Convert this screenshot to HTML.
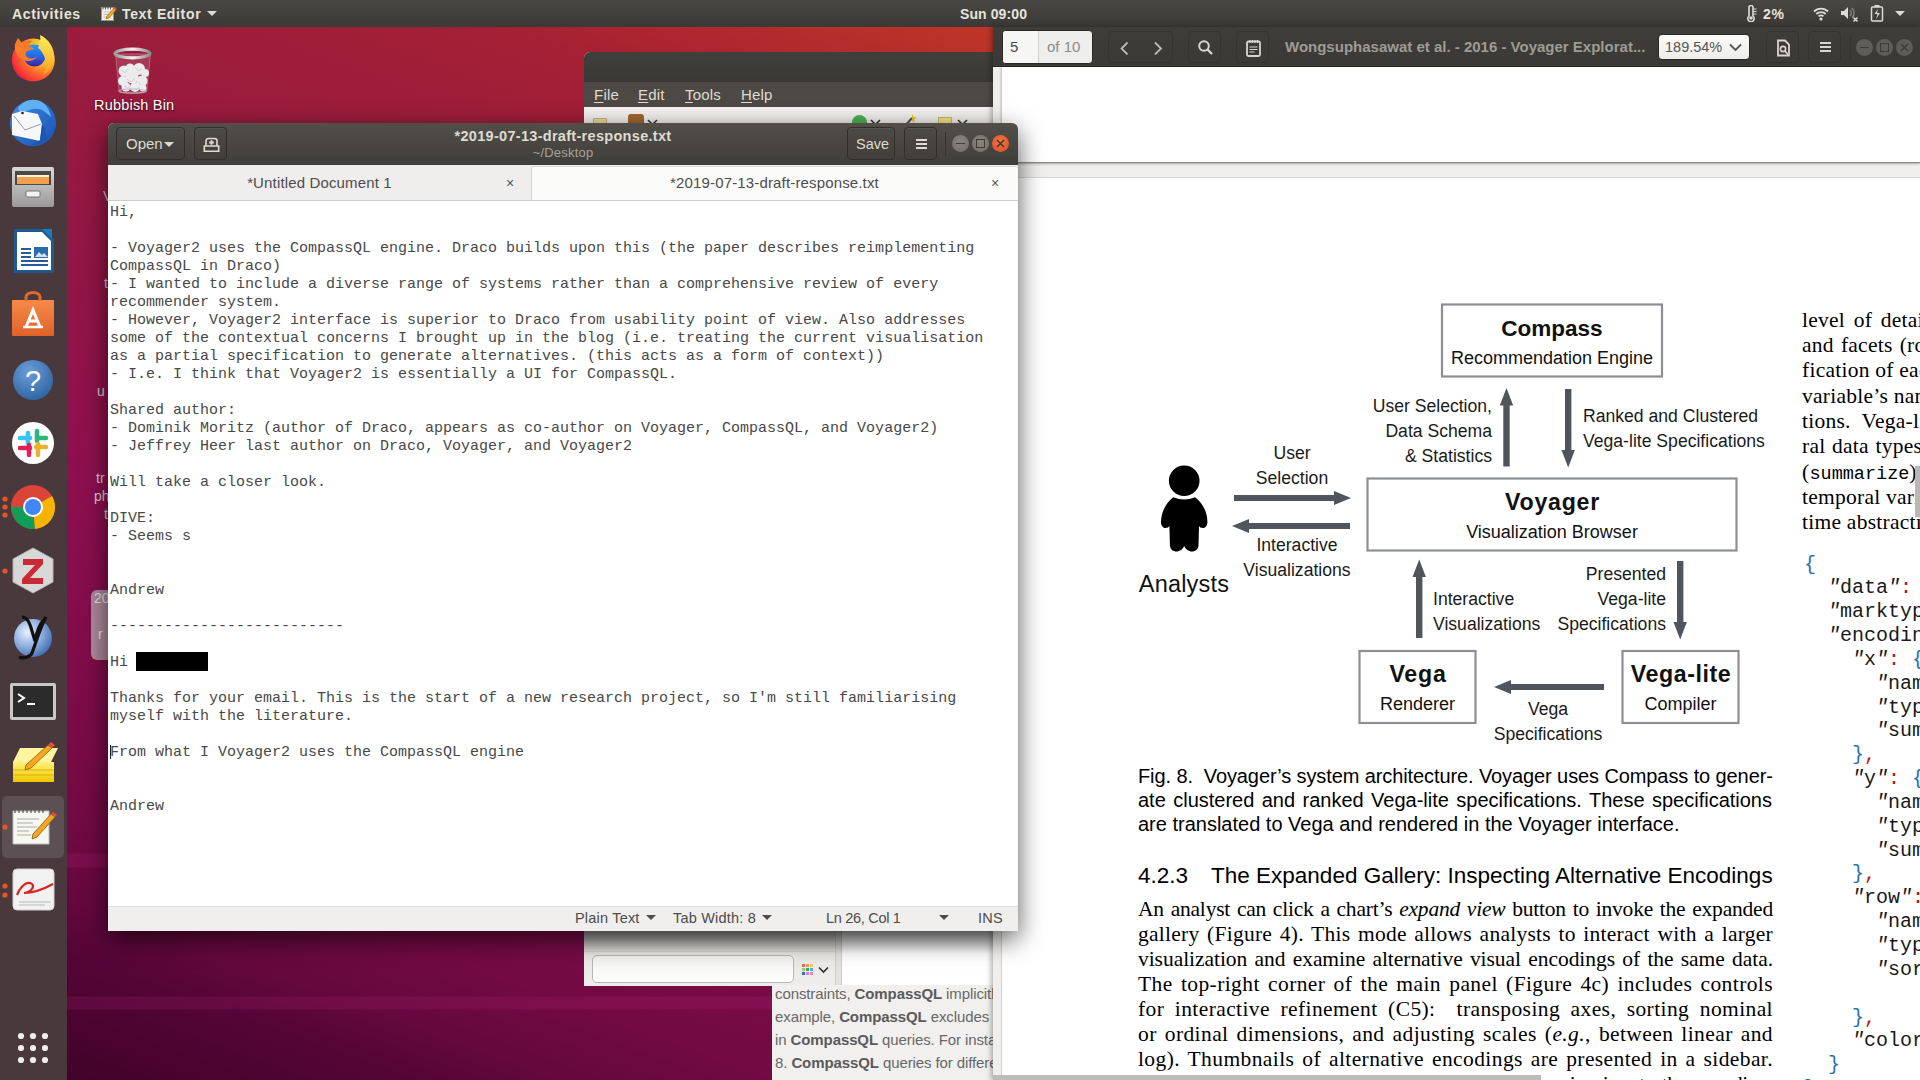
<!DOCTYPE html>
<html><head><meta charset="utf-8">
<style>
*{margin:0;padding:0;box-sizing:border-box}
html,body{width:1920px;height:1080px;overflow:hidden;position:relative;font-family:"Liberation Sans",sans-serif;background:#5a0838}
.a{position:absolute}
#wall{left:0;top:0;width:1920px;height:1080px;background:linear-gradient(180deg,rgba(0,0,0,0) 996px,rgba(200,40,140,.15) 997px,rgba(200,40,140,.15) 1009px,rgba(0,0,0,0) 1010px),linear-gradient(180deg,rgba(0,0,0,0) 853px,rgba(200,40,140,.15) 854px,rgba(200,40,140,.15) 867px,rgba(0,0,0,0) 868px),linear-gradient(20deg,#3c0228 0%,#410329 1.4%,#550537 8.7%,#64083e 11.5%,#730a44 16.4%,#8c0f50 34%,#951744 50%,#9b1c3c 60.6%,#a52034 69.4%,#bf3526 79.5%,#e95420 100%)}
.tb{font-weight:bold;font-size:14px;color:#e6e3dc;white-space:nowrap;line-height:19px;letter-spacing:.65px}
#topbar{left:0;top:0;width:1920px;height:27px;background:linear-gradient(#4a4843,#3a3935)}
#dock{left:0;top:27px;width:67px;height:1053px;background:#49393c}
/* background app window */
.mn{top:34px;font-size:15px;color:#dfdbd2;letter-spacing:.2px}
.mn u{text-decoration-thickness:1px;text-underline-offset:2px}
.zt{left:3px;font-size:15px;letter-spacing:-.1px;line-height:20px;color:#676767;white-space:nowrap}
.zt b{color:#5a5a5a}
.frg{font-size:14px;color:#d9cdd3;white-space:nowrap}
#bgwin{left:584px;top:52px;width:409px;height:934px;background:#f2f1f0;border-radius:6px 0 0 0;overflow:hidden}
/* pdf viewer */
.hb{border:1px solid #34332f;border-radius:4px}
.wbu{width:17px;height:17px;border-radius:50%;background:#5f5d58}
.cap{left:1138px;width:634px;font-size:20px;line-height:24px;color:#000;text-align:justify;text-align-last:justify;white-space:nowrap}
.bd{left:1138px;width:635px;font-family:"Liberation Serif",serif;font-size:21.5px;line-height:25px;color:#000;text-align:justify;text-align-last:justify}
.rc{left:1802px;letter-spacing:.25px;font-family:"Liberation Serif",serif;font-size:21.5px;line-height:25px;color:#000;white-space:nowrap}
.cb{color:#2a6db5}.cr{color:#b01818}
#pdf{left:993px;top:27px;width:927px;height:1053px;background:#f0efed;box-shadow:-2px 0 5px rgba(0,0,0,.3)}
#pdfhdr{left:0;top:0;width:927px;height:40px;background:linear-gradient(#3e3d39,#3a3935);border-bottom:1px solid #2a2926}
/* text editor */
#ed{left:108px;top:123px;width:910px;height:808px;background:#fff;border-radius:6px 6px 0 0;box-shadow:0 8px 26px rgba(0,0,0,.65)}
#edhdr{left:0;top:0;width:910px;height:42px;background:linear-gradient(#524f49,#403e3a);border-radius:6px 6px 0 0}
#tabs{left:0;top:42px;width:910px;height:36px;background:#efeeec;border-bottom:1px solid #cfcdc8}
#txt{left:0;top:78px;width:910px;height:705px;background:#fff;font-family:"Liberation Mono",monospace;font-size:15px;line-height:18px;color:#484848;padding:3px 0 0 2px;white-space:pre}
.st{top:3px;font-size:14.5px;color:#4c4c4c;white-space:nowrap;letter-spacing:.2px}
.tri{width:0;height:0;border-left:5px solid transparent;border-right:5px solid transparent;border-top:5px solid #4c4c4c}
.btn{border:1px solid #2f2e2b;border-radius:4px;background:linear-gradient(#4c4a44,#423f3b);box-shadow:inset 0 1px 0 rgba(255,255,255,.06)}
.wbtn{width:17px;height:17px;border-radius:50%;background:radial-gradient(circle at 50% 40%,#8a877f,#6f6c66)}
#status{left:0;top:783px;width:910px;height:25px;background:#f0efed;border-top:1px solid #e0deda}
</style></head><body>
<div id="wall" class="a"></div>
<div id="topbar" class="a">
 <div class="a tb" style="left:12px;top:5px">Activities</div>
 <svg class="a" style="left:100px;top:5px" width="17" height="17" viewBox="0 0 17 17"><rect x="1.5" y="2.5" width="12" height="13" fill="#f4f1e6" stroke="#9a968a" stroke-width="1"/><path d="M3 1.5v3M5.5 1.5v3M8 1.5v3M10.5 1.5v3" stroke="#666" stroke-width="1"/><path d="M3.5 7h8M3.5 9.5h8M3.5 12h5" stroke="#bbb" stroke-width="1"/><path d="M6 14l1-3 7-8 2 2-7 8z" fill="#f5a623" stroke="#8a5a00" stroke-width=".6"/><path d="M14 3l2 2 1-1-2-2z" fill="#e74c3c"/></svg>
 <div class="a tb" style="left:122px;top:5px">Text Editor</div>
 <div class="a" style="left:207px;top:11px;width:0;height:0;border-left:5px solid transparent;border-right:5px solid transparent;border-top:5px solid #dedbd4"></div>
 <div class="a tb" style="left:960px;top:5px;letter-spacing:.1px">Sun 09:00</div>
 <svg class="a" style="left:1746px;top:5px" width="12" height="17" viewBox="0 0 12 17"><path d="M3 2.5a2 2 0 0 1 4 0v8.5a3.2 3.2 0 1 1-4 0z" fill="none" stroke="#dedbd4" stroke-width="1.6"/><circle cx="5" cy="13" r="1.8" fill="#dedbd4"/><path d="M7.5 4h3M7.5 6.5h3M7.5 9h3" stroke="#dedbd4" stroke-width="1.2"/></svg>
 <div class="a tb" style="left:1763px;top:5px">2%</div>
 <svg class="a" style="left:1813px;top:6px" width="16" height="15" viewBox="0 0 16 15"><path d="M1 5.5a10 10 0 0 1 14 0M3.3 8a6.6 6.6 0 0 1 9.4 0M5.6 10.4a3.3 3.3 0 0 1 4.8 0" fill="none" stroke="#dedbd4" stroke-width="1.8"/><circle cx="8" cy="13" r="1.6" fill="#dedbd4"/></svg>
 <svg class="a" style="left:1840px;top:5px" width="19" height="17" viewBox="0 0 19 17"><path d="M1 6h3l4-4v12l-4-4H1z" fill="#dedbd4"/><path d="M10 5a4 4 0 0 1 0 6M12 3a7 7 0 0 1 0 10" fill="none" stroke="#8d8a84" stroke-width="1.3"/><path d="M13.5 12.5l4 4M17.5 12.5l-4 4" stroke="#dedbd4" stroke-width="1.5"/></svg>
 <svg class="a" style="left:1870px;top:4px" width="14" height="18" viewBox="0 0 14 18"><rect x="1.5" y="3" width="11" height="14" rx="1" fill="none" stroke="#dedbd4" stroke-width="1.5"/><rect x="4.5" y="1" width="5" height="2" fill="#dedbd4"/><path d="M8 5l-3.5 5h3l-1.5 5 4-6h-3z" fill="#dedbd4"/></svg>
 <div class="a" style="left:1895px;top:11px;width:0;height:0;border-left:5px solid transparent;border-right:5px solid transparent;border-top:5px solid #dedbd4"></div>
</div>
<div id="dock" class="a">
 <svg class="a" style="left:0;top:0" width="67" height="1053" viewBox="0 27 67 1053">
  <!-- firefox -->
  <defs>
   <radialGradient id="ffg" cx=".8" cy=".25" r="1"><stop offset="0" stop-color="#fff44f"/><stop offset=".35" stop-color="#ffb32a"/><stop offset=".6" stop-color="#ff6a2a"/><stop offset=".85" stop-color="#f5283a"/><stop offset="1" stop-color="#c71a6a"/></radialGradient><linearGradient id="ffb" x1="0" y1="0" x2="0" y2="1"><stop offset="0" stop-color="#1aa0ff"/><stop offset=".6" stop-color="#2a5ee0"/><stop offset="1" stop-color="#3a1f9a"/></linearGradient><linearGradient id="ffy" x1="0" y1="0" x2="0" y2="1"><stop offset="0" stop-color="#fff05a"/><stop offset="1" stop-color="#ffa020"/></linearGradient>
   <radialGradient id="ffc" cx=".5" cy=".5" r=".5"><stop offset="0" stop-color="#7542e5"/><stop offset="1" stop-color="#3a1a8a"/></radialGradient>
   <linearGradient id="tbg" x1="0" y1="0" x2="1" y2="1"><stop offset="0" stop-color="#3d8ee8"/><stop offset="1" stop-color="#1a4fb0"/></linearGradient>
   <linearGradient id="cab" x1="0" y1="0" x2="0" y2="1"><stop offset="0" stop-color="#d8d8d8"/><stop offset="1" stop-color="#9a9a9a"/></linearGradient>
   <linearGradient id="bag" x1="0" y1="0" x2="0" y2="1"><stop offset="0" stop-color="#f68a4a"/><stop offset="1" stop-color="#e0622a"/></linearGradient>
   <radialGradient id="hlp" cx=".4" cy=".3" r=".8"><stop offset="0" stop-color="#6a9fd8"/><stop offset="1" stop-color="#2a5f9e"/></radialGradient>
   <radialGradient id="jab" cx=".35" cy=".35" r=".75"><stop offset="0" stop-color="#e8f0ff"/><stop offset=".5" stop-color="#8fb0e0"/><stop offset="1" stop-color="#3a68b0"/></radialGradient>
   <linearGradient id="nts" x1="0" y1="0" x2="0" y2="1"><stop offset="0" stop-color="#fff27a"/><stop offset="1" stop-color="#f0c800"/></linearGradient>
  </defs>
  <circle cx="33.3" cy="60" r="21.5" fill="url(#ffg)"/>
  <circle cx="34.5" cy="55.5" r="11" fill="url(#ffb)"/>
  <path d="M15 44l3-6 4 5c3-2 7-3 10-2-2 2-3 4-3 6 2 0 4 0 5 2-3 1-6 1-8 3-1 2 0 5 3 6 3 1 6 0 8-1-3 4-9 5-14 3-6-3-9-10-8-16z" fill="#ff7a2a"/>
  <path d="M40 35c9 4 15 13 14 24-1 7-5 13-11 16 3-5 4-11 2-16-1-5-4-9-7-11 2-4 3-9 2-13z" fill="url(#ffy)"/>
  <!-- thunderbird -->
  <circle cx="33" cy="123.3" r="23" fill="url(#tbg)"/>
  <path d="M18 108c5-8 14-10 22-7 6 3 10 9 11 16l-6-5c-3-3-8-4-12-3-5 1-9 3-12 6z" fill="#5fb0f5"/>
  <path d="M12 114l10-3 16 3 4 10-2 17-28-6z" fill="#f7f7f9"/>
  <path d="M14 116l11 14 16-6" fill="none" stroke="#8a8f98" stroke-width=".9"/>
  <circle cx="22.5" cy="113" r="1.3" fill="#222"/>
  <path d="M42 124c3 4 5 10 3 15-3 4-8 6-13 6l8-5z" fill="#1b56b0"/>
  <!-- files -->
  <rect x="12" y="167" width="42" height="40" rx="2" fill="url(#cab)"/>
  <rect x="15" y="171" width="36" height="14" fill="#4a4a4a"/>
  <rect x="17" y="175" width="32" height="9" fill="#f0a050"/>
  <rect x="17" y="175" width="32" height="2" fill="#fff3d0"/>
  <rect x="26" y="191" width="14" height="6" rx="1" fill="#f4f4f4" stroke="#777" stroke-width="1"/>
  <!-- writer -->
  <path d="M14 229h30l10 10v34H14z" fill="#1d5a8f"/>
  <path d="M17 232h25l9 9v29H17z" fill="#fff"/>
  <path d="M42 229h10v10z" fill="#1d79c0"/>
  <rect x="34" y="247" width="14" height="11" fill="#2a6aad"/><path d="M35 257l4-5 3 3 2-2 4 4z" fill="#d0e4f7"/>
  <path d="M21 249h10M21 253h10M21 257h10M21 261h27M21 265h27" stroke="#2a5a9a" stroke-width="2"/>
  <!-- software -->
  <rect x="12" y="300" width="42" height="36" rx="1" fill="url(#bag)"/>
  <path d="M26 301v-4a7 4.5 0 0 1 14 0v4" fill="none" stroke="#e06a2a" stroke-width="3"/>
  <path d="M26 327l7-17 7 17M28 321h10" fill="none" stroke="#fff" stroke-width="3"/>
  <path d="M23 327h20" stroke="#fff" stroke-width="2.5"/>
  <!-- help -->
  <circle cx="33" cy="380" r="20" fill="url(#hlp)"/>
  <text x="33" y="391" font-family="Liberation Sans" font-size="29" fill="#fff" text-anchor="middle">?</text>
  <!-- slack -->
  <circle cx="33" cy="443" r="21" fill="#fff"/>
  <g stroke-linecap="round" stroke-width="4.5">
   <path d="M28 433v10" stroke="#36c5f0"/><path d="M20 438h10" stroke="#36c5f0"/>
   <path d="M37 431v10" stroke="#2eb67d"/><path d="M37 438h9" stroke="#2eb67d"/>
   <path d="M38 444v11" stroke="#ecb22e"/><path d="M36 447h10" stroke="#ecb22e"/>
   <path d="M29 445v10" stroke="#e01e5a"/><path d="M20 448h10" stroke="#e01e5a"/>
  </g>
  <!-- chrome -->
  <circle cx="33" cy="507" r="22" fill="#db4437"/>
  <path d="M33 507L14 518a22 22 0 0 0 21 11z" fill="#0f9d58"/>
  <path d="M33 507l2 22a22 22 0 0 0 17-33z" fill="#f4b400"/>
  <path d="M33 507L14 518a22 22 0 0 1-2-11z" fill="#0f9d58"/>
  <circle cx="33" cy="507" r="10" fill="#fff"/><circle cx="33" cy="507" r="8" fill="#4285f4"/>
  <!-- zotero -->
  <path d="M33 548l20 11v23l-20 11-20-11v-23z" fill="#d8d8d8" stroke="#b0b0b0" stroke-width="1"/>
  <path d="M23 559h20v5l-13 14h13v6H22v-5l13-14H23z" fill="#cc2936"/>
  <!-- jabref -->
  <circle cx="33" cy="638" r="19" fill="url(#jab)"/>
  <path d="M22 617c5 0 8 6 10 14l3 10c2-10 5-18 9-21l2-3c-5 9-9 22-14 36-2 4-8 6-13 4" fill="none" stroke="#111" stroke-width="3.2"/>
  <!-- terminal -->
  <rect x="10" y="683" width="46" height="37" rx="2" fill="#c8c8c8"/>
  <rect x="13" y="686" width="40" height="31" fill="#2b2b2b"/>
  <path d="M18 694l6 4-6 4" fill="none" stroke="#fff" stroke-width="2"/><path d="M27 704h8" stroke="#fff" stroke-width="2"/>
  <!-- notes -->
  <path d="M13 762l7-14h38l-7 14z" fill="#fff5a0"/>
  <rect x="13" y="762" width="41" height="20" fill="url(#nts)"/>
  <path d="M13 770h41M13 775h41" stroke="#e0b000" stroke-width="1"/>
  <path d="M26 765l22-20 4 3-21 20-6 2z" fill="#f5a623" stroke="#8a5a00" stroke-width=".8"/><path d="M48 745l3-3 4 3-3 3z" fill="#e74c3c"/>
  <!-- gedit highlight -->
  <rect x="2" y="796" width="62" height="62" rx="5" fill="#5c5054"/>
  <path d="M13 811h36v33H13z" fill="#f7f7f2" stroke="#bbb" stroke-width="1"/>
  <path d="M15 808v5M19 808v5M23 808v5M27 808v5M31 808v5M35 808v5M39 808v5M43 808v5" stroke="#555" stroke-width="1.2"/>
  <path d="M17 819h22M17 823h16M17 827h20M17 831h12M17 835h14" stroke="#aaa" stroke-width="1"/>
  <path d="M33 834l18-20 4 3-18 20-5 2z" fill="#f5a623" stroke="#8a5a00" stroke-width=".8"/><path d="M51 814l2-2 4 3-2 2z" fill="#e74c3c"/>
  <!-- evince -->
  <rect x="13" y="869" width="41" height="41" rx="4" fill="#f2f2f2" stroke="#cfcfcf" stroke-width="1"/>
  <path d="M17 895c3-8 10-15 15-11 3 3-2 9-8 9 8 0 18-3 29-9" fill="none" stroke="#d22" stroke-width="2.2"/>
  <path d="M19 902h32M19 905h26" stroke="#bbb" stroke-width="1"/>
  <!-- running dots -->
  <g fill="#e95420">
   <circle cx="5" cy="499" r="2.6"/><circle cx="5" cy="507" r="2.6"/><circle cx="5" cy="515" r="2.6"/>
   <circle cx="5" cy="571" r="2.6"/>
   <circle cx="5" cy="827" r="2.6"/>
   <circle cx="5" cy="886" r="2.6"/><circle cx="5" cy="895" r="2.6"/>
  </g>
  <g fill="#f0eeea">
   <circle cx="21" cy="1036" r="3.1"/><circle cx="33" cy="1036" r="3.1"/><circle cx="45" cy="1036" r="3.1"/>
   <circle cx="21" cy="1048" r="3.1"/><circle cx="33" cy="1048" r="3.1"/><circle cx="45" cy="1048" r="3.1"/>
   <circle cx="21" cy="1060" r="3.1"/><circle cx="33" cy="1060" r="3.1"/><circle cx="45" cy="1060" r="3.1"/>
  </g>
 </svg>
</div>
<div class="a" style="left:112px;top:46px;width:42px;height:48px">
 <svg class="a" style="left:0;top:0" width="42" height="48" viewBox="0 0 42 48"><defs><linearGradient id="rim" x1="0" y1="0" x2="1" y2="0"><stop offset="0" stop-color="#9a9a9a"/><stop offset=".5" stop-color="#f2f2f2"/><stop offset="1" stop-color="#8a8a8a"/></linearGradient></defs><path d="M3.5 8l3.5 37c1 2 7 2.5 14 2.5s13-.5 14-2.5l3.5-37z" fill="rgba(255,255,255,.13)" stroke="rgba(255,255,255,.3)" stroke-width=".8"/><g fill="#ececec"><circle cx="12" cy="25" r="5.5"/><circle cx="18" cy="22" r="4.5"/><circle cx="27" cy="23" r="6"/><circle cx="33" cy="27" r="4"/><circle cx="11" cy="35" r="5"/><circle cx="20" cy="31" r="6.5"/><circle cx="30" cy="35" r="5.5"/><circle cx="14" cy="41" r="4.5"/><circle cx="23" cy="41" r="5"/><circle cx="31" cy="42" r="3.5"/></g><g fill="none" stroke="#c4c4c4" stroke-width=".7"><path d="M9 24l4 3 3-4M23 21l3 4 4-2M15 33l4 3 4-4M26 36l3 3M12 40l4 2 3-3M24 44l3-3"/></g><ellipse cx="20.5" cy="45" rx="14" ry="2" fill="none" stroke="#bdbdbd" stroke-width="1"/><ellipse cx="20.5" cy="7.5" rx="17.5" ry="4.3" fill="none" stroke="url(#rim)" stroke-width="3.2"/></svg>
</div>
<div class="a" style="left:94px;top:97px;font-size:14.5px;color:#fff;text-shadow:0 1px 2px rgba(0,0,0,.8);letter-spacing:.2px">Rubbish Bin</div>

<div class="a" style="left:91px;top:590px;width:30px;height:70px;background:rgba(190,180,184,.75);border-radius:6px"></div>
<div class="a frg" style="left:94px;top:590px;color:#e8e4e6">20</div>
<div class="a frg" style="left:98px;top:626px;color:#e8e4e6">r</div>
<div class="a frg" style="left:103px;top:188px">V</div>
<div class="a frg" style="left:104px;top:275px">t</div>
<div class="a frg" style="left:97px;top:383px">u</div>
<div class="a frg" style="left:96px;top:470px">tr</div>
<div class="a frg" style="left:94px;top:488px">ph</div>
<div class="a frg" style="left:104px;top:506px">t</div>
<div id="bgwin" class="a">
 <div class="a" style="left:0;top:0;width:409px;height:30px;background:linear-gradient(#403f3b,#3a3935)"></div>
 <div class="a" style="left:0;top:30px;width:409px;height:25px;background:#4d4a45"></div>
 <div class="a mn" style="left:10px"><u>F</u>ile</div>
 <div class="a mn" style="left:54px"><u>E</u>dit</div>
 <div class="a mn" style="left:101px"><u>T</u>ools</div>
 <div class="a mn" style="left:157px"><u>H</u>elp</div>
 <div class="a" style="left:0;top:55px;width:409px;height:40px;background:linear-gradient(#f6f5f3,#e2e0dc)"></div>
 <div class="a" style="left:9px;top:66px;width:14px;height:12px;background:#e8d7a0;border:1px solid #c8b27a;border-radius:1px"></div>
 <div class="a" style="left:44px;top:62px;width:16px;height:14px;background:#a0662e;border-radius:3px 3px 0 0"></div>
 <svg class="a" style="left:63px;top:67px" width="11" height="7"><path d="M1 1l4.5 4.5L10 1" fill="none" stroke="#333" stroke-width="1.6"/></svg>
 <div class="a" style="left:268px;top:63px;width:15px;height:15px;background:#4caf50;border-radius:50%"></div>
 <svg class="a" style="left:286px;top:67px" width="11" height="7"><path d="M1 1l4.5 4.5L10 1" fill="none" stroke="#333" stroke-width="1.6"/></svg>
 <svg class="a" style="left:320px;top:61px" width="12" height="14"><path d="M1 13l7-8" stroke="#555" stroke-width="2"/><path d="M8 1l1.5 3 3 .5-2.5 2 .5 3-2.5-1.5" fill="#f4c20d"/></svg>
 <div class="a" style="left:354px;top:65px;width:14px;height:13px;background:#f2e08a;border:1px solid #cdb85c"></div>
 <svg class="a" style="left:373px;top:67px" width="11" height="7"><path d="M1 1l4.5 4.5L10 1" fill="none" stroke="#333" stroke-width="1.6"/></svg>
 <div class="a" style="left:0;top:878px;width:251px;height:56px;background:linear-gradient(#d4d2ce,#eae9e6 40%,#eeedeb)"></div>
 <div class="a" style="left:0;top:899px;width:251px;height:1px;background:#dddbd7"></div>
 <div class="a" style="left:8px;top:903px;width:202px;height:28px;border:1px solid #b9b7b2;border-radius:5px;background:linear-gradient(#f2f1f0,#fff)"></div>
 <div class="a" style="left:218px;top:912px;width:11px;height:11px;background:
  radial-gradient(circle,#e74c3c 1.2px,transparent 1.3px) 0 0/3.7px 3.7px"></div>
 <svg class="a" style="left:218px;top:912px" width="11" height="11"><g><rect x="0" y="0" width="3" height="3" fill="#e66"/><rect x="4" y="0" width="3" height="3" fill="#f0a050"/><rect x="8" y="0" width="3" height="3" fill="#f0d050"/><rect x="0" y="4" width="3" height="3" fill="#8c8"/><rect x="4" y="4" width="3" height="3" fill="#4a4"/><rect x="8" y="4" width="3" height="3" fill="#5af"/><rect x="0" y="8" width="3" height="3" fill="#46a"/><rect x="4" y="8" width="3" height="3" fill="#c8e"/><rect x="8" y="8" width="3" height="3" fill="#e8a"/></g></svg>
 <svg class="a" style="left:234px;top:914px" width="11" height="8"><path d="M1 1.5l4.5 4.5L10 1.5" fill="none" stroke="#333" stroke-width="1.7"/></svg>
 <div class="a" style="left:251px;top:878px;width:7px;height:56px;background:#e4e3e0;border-left:1px solid #cfcdc9;border-right:1px solid #cfcdc9"></div>
 <div class="a" style="left:258px;top:878px;width:151px;height:56px;background:#fff"></div>
 <div class="a" style="left:0;top:878px;width:409px;height:24px;background:linear-gradient(rgba(0,0,0,.35),rgba(0,0,0,0))"></div>
</div>
<div id="zot" class="a" style="left:772px;top:985px;width:221px;height:95px;background:#f1f0ee;overflow:hidden">
 <div class="a zt" style="top:-1px">constraints, <b>CompassQL</b> implicitly</div>
 <div class="a zt" style="top:22px">example, <b>CompassQL</b> excludes data</div>
 <div class="a zt" style="top:45px">in <b>CompassQL</b> queries. For instance</div>
 <div class="a zt" style="top:68px">8. <b>CompassQL</b> queries for different</div>
</div>
<div id="pdf" class="a">
 <div id="pdfhdr" class="a">
  <div class="a" style="left:9px;top:3px;width:91px;height:34px;border:1px solid #2a2926;border-radius:4px;background:#eeeeec;overflow:hidden">
   <div class="a" style="left:0;top:0;width:36px;height:32px;background:#f6f6f5;border-right:1px solid #cfcdc8"></div>
   <div class="a" style="left:7px;top:7px;font-size:15px;color:#4a4a4a">5</div>
   <div class="a" style="left:44px;top:7px;font-size:15px;color:#8b8b8b">of 10</div>
  </div>
  <div class="a hb" style="left:115px;top:4px;width:65px;height:32px"><svg class="a" style="left:9px;top:9px" width="48" height="14" viewBox="0 0 48 14"><path d="M9.5 1.5L3.5 7.5l6 6M37 1.5l6 6-6 6" fill="none" stroke="#bdbab3" stroke-width="1.8"/></svg></div>
  <div class="a hb" style="left:195px;top:4px;width:33px;height:32px"><svg class="a" style="left:8px;top:7px" width="17" height="17" viewBox="0 0 17 17"><circle cx="7" cy="7" r="4.8" fill="none" stroke="#d8d5ce" stroke-width="2"/><path d="M10.5 10.5l4.5 4.5" stroke="#d8d5ce" stroke-width="2.4"/></svg></div>
  <div class="a hb" style="left:243px;top:4px;width:33px;height:32px"><svg class="a" style="left:9px;top:7px" width="15" height="18" viewBox="0 0 15 18"><rect x="1" y="2.5" width="13" height="14.5" rx="1.5" fill="none" stroke="#d8d5ce" stroke-width="1.8"/><path d="M4 1v3M6.5 1v3M9 1v3M11.5 1v3" stroke="#d8d5ce" stroke-width="1.2"/><path d="M3.5 8h8M3.5 10.5h8M3.5 13h5" stroke="#d8d5ce" stroke-width="1.2"/></svg></div>
  <div class="a" id="pdftitle" style="left:292px;top:11px;font-weight:bold;font-size:15px;color:#9e9b94;white-space:nowrap;letter-spacing:0px">Wongsuphasawat et al. - 2016 - Voyager Explorat...</div>
  <div class="a" style="left:665px;top:7px;width:92px;height:26px;border:1px solid #2a2926;border-radius:4px;background:linear-gradient(#fbfbfa,#eeeeec)">
   <div class="a" id="zoomt" style="left:6px;top:4px;font-size:14.5px;color:#555">189.54%</div>
   <svg class="a" style="left:70px;top:8px" width="13" height="9" viewBox="0 0 13 9"><path d="M1 1.5l5.5 5.5 5.5-5.5" fill="none" stroke="#555" stroke-width="1.8"/></svg>
  </div>
  <div class="a hb" style="left:773px;top:4px;width:33px;height:32px"><svg class="a" style="left:9px;top:7px" width="15" height="18" viewBox="0 0 15 18"><path d="M2 1.5h7l4 4v11H2z" fill="none" stroke="#d8d5ce" stroke-width="1.8"/><circle cx="7" cy="10" r="2.6" fill="none" stroke="#d8d5ce" stroke-width="1.6"/><path d="M9 12l3 3.5" stroke="#d8d5ce" stroke-width="1.8"/></svg></div>
  <div class="a hb" style="left:815px;top:4px;width:33px;height:32px"><div class="a" style="left:11px;top:10px;width:11px;height:2px;background:#d8d5ce;box-shadow:0 4px 0 #d8d5ce,0 8px 0 #d8d5ce"></div></div>
  <div class="a" style="left:857px;top:9px;width:1px;height:24px;background:#34332f"></div>
  <div class="a wbu" style="left:863px;top:12px"><div class="a" style="left:4px;top:7.5px;width:9px;height:1.5px;background:#3c3b37"></div></div>
  <div class="a wbu" style="left:883px;top:12px"><div class="a" style="left:4px;top:4px;width:9px;height:9px;border:1.5px solid #3c3b37"></div></div>
  <div class="a wbu" style="left:903px;top:12px"><svg class="a" style="left:4px;top:4px" width="9" height="9" viewBox="0 0 9 9"><path d="M1 1l7 7M8 1l-7 7" stroke="#3c3b37" stroke-width="1.5"/></svg></div>
 </div>
 <div class="a" style="left:8px;top:40px;width:919px;height:96px;background:#fff;border-left:1px solid #d0cfcc;border-bottom:1px solid #8c8b88;box-shadow:0 1px 2px rgba(0,0,0,.3)"></div>
 <div class="a" id="page2" style="left:8px;top:150px;width:919px;height:903px;background:#fff;border-top:1px solid #d9d8d5;border-left:1px solid #d0cfcc"></div>
</div>
<svg id="diag" class="a" style="left:0;top:0" width="1920" height="1080" viewBox="0 0 1920 1080">
 <g fill="none" stroke="#8c8f94" stroke-width="2.2">
  <rect x="1442" y="304.5" width="220" height="72"/>
  <rect x="1367.5" y="478.5" width="369" height="72"/>
  <rect x="1359.5" y="651" width="116" height="72"/>
  <rect x="1622.5" y="651" width="116" height="72"/>
 </g>
 <g fill="#50555d">
  <path d="M1234 495h100v-4l17 7-17 7v-4h-100z"/>
  <path d="M1350 523h-101v-4l-17 7 17 7v-4h101z"/>
  <path d="M1503.3 466.5v-61h-3.5l6.7-17.5 6.7 17.5h-3.5v61z"/>
  <path d="M1565 389v61h-3.5l6.7 17.5 6.7-17.5h-3.5v-61z"/>
  <path d="M1416 638v-61h-3.5l6.7-17.5 6.7 17.5h-3.5v61z"/>
  <path d="M1677 561v61h-3.5l6.7 17.5 6.7-17.5h-3.5v-61z"/>
  <path d="M1604 684h-93v-4l-17 7 17 7v-4h93z"/>
 </g>
 <g fill="#000">
  <circle cx="1184.2" cy="480.8" r="15.3"/>
  <path d="M1173.3 497.2Q1184.2 502 1195.1 497.2C1203 503 1207.5 513 1207.4 522C1207.4 526 1205 528 1203 528C1201 528 1199.5 527 1199 525.7L1198.5 545C1198.5 549.5 1195 551.5 1192 551.5C1188.5 551.5 1185.5 549 1184.2 546C1182.9 549 1179.9 551.5 1176.4 551.5C1173.4 551.5 1169.9 549.5 1169.9 545L1169.4 525.7C1168.9 527 1167.4 528 1165.4 528C1163.4 528 1161 526 1161 522C1161 513 1165.4 503 1173.3 497.2Z"/>
 </g>
 <g font-family="Liberation Sans" fill="#111">
  <text x="1552" y="336" font-size="22.5" font-weight="bold" text-anchor="middle">Compass</text>
  <text x="1552" y="364" font-size="18" text-anchor="middle">Recommendation Engine</text>
  <text x="1552.5" y="510" font-size="23.2" font-weight="bold" text-anchor="middle" letter-spacing=".75">Voyager</text>
  <text x="1552" y="538" font-size="18" text-anchor="middle">Visualization Browser</text>
  <text x="1418" y="682" font-size="23.2" font-weight="bold" text-anchor="middle" letter-spacing=".75">Vega</text>
  <text x="1417.5" y="710" font-size="18" text-anchor="middle">Renderer</text>
  <text x="1681" y="682" font-size="23.2" font-weight="bold" text-anchor="middle" letter-spacing=".55">Vega-lite</text>
  <text x="1680.5" y="710" font-size="18" text-anchor="middle">Compiler</text>
  <text x="1184" y="592" font-size="23.5" text-anchor="middle" letter-spacing=".2">Analysts</text>
 </g>
 <g font-family="Liberation Sans" fill="#1a1a1a" font-size="17.6">
  <text x="1492" y="412" text-anchor="end">User Selection,</text>
  <text x="1492" y="437" text-anchor="end">Data Schema</text>
  <text x="1492" y="462" text-anchor="end">&amp; Statistics</text>
  <text x="1583" y="421.5">Ranked and Clustered</text>
  <text x="1583" y="446.5">Vega-lite Specifications</text>
  <text x="1292" y="459" text-anchor="middle">User</text>
  <text x="1292" y="484" text-anchor="middle">Selection</text>
  <text x="1297" y="550.5" text-anchor="middle">Interactive</text>
  <text x="1297" y="575.5" text-anchor="middle">Visualizations</text>
  <text x="1433" y="604.5">Interactive</text>
  <text x="1433" y="629.5">Visualizations</text>
  <text x="1666" y="579.5" text-anchor="end">Presented</text>
  <text x="1666" y="604.5" text-anchor="end">Vega-lite</text>
  <text x="1666" y="629.5" text-anchor="end">Specifications</text>
  <text x="1548" y="715" text-anchor="middle">Vega</text>
  <text x="1548" y="740" text-anchor="middle">Specifications</text>
 </g>
</svg>
<div id="pdftext" class="a" style="left:0;top:0;width:1920px;height:1080px;overflow:hidden">
 <div class="a cap" style="top:763.5px;letter-spacing:-.1px">Fig. 8.&nbsp; Voyager’s system architecture. Voyager uses Compass to gener-</div>
 <div class="a cap" style="top:787.5px">ate clustered and ranked Vega-lite specifications. These specifications</div>
 <div class="a cap" style="top:811.5px;text-align-last:left">are translated to Vega and rendered in the Voyager interface.</div>
 <div class="a" style="left:1138px;top:862.5px;font-size:22.5px;line-height:26px;color:#000;white-space:nowrap">4.2.3<span style="display:inline-block;width:23px"></span>The Expanded Gallery: Inspecting Alternative Encodings</div>
 <div class="a bd" style="top:896.5px;letter-spacing:-0.2px">An analyst can click a chart’s <i>expand view</i> button to invoke the expanded</div>
 <div class="a bd" style="top:921.5px;letter-spacing:0.25px">gallery (Figure 4). This mode allows analysts to interact with a larger</div>
 <div class="a bd" style="top:946.5px;letter-spacing:-0.05px">visualization and examine alternative visual encodings of the same data.</div>
 <div class="a bd" style="top:971.5px;letter-spacing:0.4px">The top-right corner of the main panel (Figure 4c) includes controls</div>
 <div class="a bd" style="top:996.5px;letter-spacing:0.4px">for interactive refinement (C5):&nbsp; transposing axes, sorting nominal</div>
 <div class="a bd" style="top:1021.5px;letter-spacing:0.4px">or ordinal dimensions, and adjusting scales (<i>e.g.</i>, between linear and</div>
 <div class="a bd" style="top:1046.5px;letter-spacing:0.4px">log). Thumbnails of alternative encodings are presented in a sidebar.</div>
 <div class="a bd" style="top:1071.5px;letter-spacing:-0.5px">Analysts can click on a thumbnail to switch the main view to the encoding.</div>
 <div class="a rc" style="top:307.5px;word-spacing:3px">level of detail (e.g., color, shape, size)</div>
 <div class="a rc" style="top:332.5px;word-spacing:1.5px">and facets (row, column), and the speci-</div>
 <div class="a rc" style="top:358px">fication of each channel includes the</div>
 <div class="a rc" style="top:383.5px">variable’s name and transforma-</div>
 <div class="a rc" style="top:408.5px">tions.&nbsp; Vega-lite supports</div>
 <div class="a rc" style="top:434px;word-spacing:1px">ral data types, aggregation</div>
 <div class="a rc" style="top:459.5px">(<span style="font-family:'Liberation Mono',monospace;font-size:18.5px;letter-spacing:0">summarize</span>), binning and</div>
 <div class="a rc" style="top:484.5px">temporal variables with</div>
 <div class="a rc" style="top:510px">time abstractions.</div>
 <div class="a" id="code" style="left:1804px;top:552.5px;font-family:'Liberation Mono',monospace;font-size:20px;line-height:23.85px;color:#1a1a1a;white-space:pre"><span class="cb">{</span>
  <i>"</i>data<i>"</i><span class="cr">:</span> <span class="cb">{</span><i>"</i>url<i>"</i><span class="cr">:</span> <i>"</i>data/cars.json<i>"</i><span class="cb">}</span><span class="cr">,</span>
  <i>"</i>marktype<i>"</i><span class="cr">:</span> <i>"</i>point<i>"</i><span class="cr">,</span>
  <i>"</i>encoding<i>"</i><span class="cr">:</span> <span class="cb">{</span>
    <i>"</i>x<i>"</i><span class="cr">:</span> <span class="cb">{</span>
      <i>"</i>name<i>"</i><span class="cr">:</span> <i>"</i>Horsepower<i>"</i><span class="cr">,</span>
      <i>"</i>type<i>"</i><span class="cr">:</span> <i>"</i>Q<i>"</i><span class="cr">,</span>
      <i>"</i>summarize<i>"</i><span class="cr">:</span> <i>"</i>mean<i>"</i>
    <span class="cb">}</span><span class="cr">,</span>
    <i>"</i>y<i>"</i><span class="cr">:</span> <span class="cb">{</span>
      <i>"</i>name<i>"</i><span class="cr">:</span> <i>"</i>Miles_per_Gallon<i>"</i><span class="cr">,</span>
      <i>"</i>type<i>"</i><span class="cr">:</span> <i>"</i>Q<i>"</i><span class="cr">,</span>
      <i>"</i>summarize<i>"</i><span class="cr">:</span> <i>"</i>mean<i>"</i>
    <span class="cb">}</span><span class="cr">,</span>
    <i>"</i>row<i>"</i><span class="cr">:</span> <span class="cb">{</span>
      <i>"</i>name<i>"</i><span class="cr">:</span> <i>"</i>Origin<i>"</i><span class="cr">,</span>
      <i>"</i>type<i>"</i><span class="cr">:</span> <i>"</i>N<i>"</i><span class="cr">,</span>
      <i>"</i>sort<i>"</i><span class="cr">:</span> <span class="cb">{</span><i>"</i>field<i>"</i><span class="cr">:</span>
  
    <span class="cb">}</span><span class="cr">,</span>
    <i>"</i>color<i>"</i><span class="cr">:</span> <span class="cb">{</span>
  <span class="cb">}</span>
<span class="cb">}</span></div>
 <div class="a" style="left:1915px;top:466px;width:5px;height:51px;background:#b9b8b5"></div>
 <div class="a" style="left:993px;top:1075px;width:548px;height:5px;background:#bdbcba"></div>
</div>
<div id="ed" class="a">
 <div id="edhdr" class="a">
  <div class="a btn" style="left:8px;top:4px;width:69px;height:33px"><span class="a" style="left:9px;top:7px;font-size:15px;color:#dfdbd2;letter-spacing:0">Open</span><div class="a" style="left:47px;top:14px;width:0;height:0;border-left:5px solid transparent;border-right:5px solid transparent;border-top:5px solid #dfdbd2"></div></div>
  <div class="a btn" style="left:86px;top:4px;width:33px;height:33px"><svg class="a" style="left:8px;top:8px" width="17" height="17" viewBox="0 0 17 17"><path d="M3 10V5a2.5 2.5 0 0 1 2.5-2.5h6A2.5 2.5 0 0 1 14 5v5M1.3 10h14.4v5.2H1.3z" fill="none" stroke="#dfdbd2" stroke-width="1.6"/><path d="M8.5 4.2v4.6M6.2 6.5h4.6" stroke="#dfdbd2" stroke-width="1.8"/></svg></div>
  <div class="a" id="edtitle" style="left:0;width:910px;top:5px;text-align:center;font-weight:bold;font-size:14.5px;color:#dfdbd2;letter-spacing:.3px">*2019-07-13-draft-response.txt</div>
  <div class="a" id="edsub" style="left:0;width:910px;top:22px;text-align:center;font-size:13px;color:#a5a29b;letter-spacing:.2px">~/Desktop</div>
  <div class="a btn" style="left:739px;top:4px;width:48px;height:33px"><span class="a" style="left:8px;top:8px;font-size:14.5px;color:#dfdbd2">Save</span></div>
  <div class="a btn" style="left:796px;top:4px;width:33px;height:33px"><div class="a" style="left:11px;top:11px;width:11px;height:2px;background:#dfdbd2;box-shadow:0 4px 0 #dfdbd2,0 8px 0 #dfdbd2"></div></div>
  <div class="a" style="left:837px;top:9px;width:1px;height:24px;background:#34332f"></div>
  <div class="a wbtn" style="left:844px;top:12px"><div class="a" style="left:4px;top:7.5px;width:9px;height:1.5px;background:#3c3b37"></div></div>
  <div class="a wbtn" style="left:864px;top:12px"><div class="a" style="left:4px;top:4px;width:9px;height:9px;border:1.5px solid #3c3b37"></div></div>
  <div class="a wbtn" style="left:884px;top:12px;background:radial-gradient(circle at 50% 40%,#f07746,#df4a1e)"><svg class="a" style="left:4px;top:4px" width="9" height="9" viewBox="0 0 9 9"><path d="M1 1l7 7M8 1l-7 7" stroke="#3c3b37" stroke-width="1.5"/></svg></div>
 </div>
 <div id="tabs" class="a">
  <div class="a" id="tab1t" style="left:0;width:423px;top:9px;text-align:center;font-size:15px;color:#4c4c4c;letter-spacing:.15px">*Untitled Document 1</div>
  <div class="a" style="left:398px;top:10px;font-size:14px;color:#555">×</div>
  <div class="a" id="tab2" style="left:423px;top:1px;width:487px;height:34px;background:#fbfbfa;border-left:1px solid #d6d4cf;border-top:1px solid #dcdad6;border-radius:3px 3px 0 0"></div>
  <div class="a" id="tab2t" style="left:423px;width:487px;top:9px;text-align:center;font-size:15px;color:#4c4c4c;letter-spacing:.15px">*2019-07-13-draft-response.txt</div>
  <div class="a" style="left:883px;top:10px;font-size:14px;color:#555">×</div>
 </div>
 <div id="txt" class="a">Hi,

- Voyager2 uses the CompassQL engine. Draco builds upon this (the paper describes reimplementing
CompassQL in Draco)
- I wanted to include a diverse range of systems rather than a comprehensive review of every
recommender system.
- However, Voyager2 interface is superior to Draco from usability point of view. Also addresses
some of the contextual concerns I brought up in the blog (i.e. treating the current visualisation
as a partial specification to generate alternatives. (this acts as a form of context))
- I.e. I think that Voyager2 is essentially a UI for CompassQL.

Shared author:
- Dominik Moritz (author of Draco, appears as co-author on Voyager, CompassQL, and Voyager2)
- Jeffrey Heer last author on Draco, Voyager, and Voyager2

Will take a closer look.

DIVE:
- Seems s


Andrew

--------------------------

Hi

Thanks for your email. This is the start of a new research project, so I'm still familiarising
myself with the literature.

From what I Voyager2 uses the CompassQL engine


Andrew</div>
 <div class="a" style="left:28px;top:529px;width:72px;height:19px;background:#000"></div>
 <div class="a" style="left:2px;top:622px;width:1px;height:14px;background:#222"></div>
 <div id="status" class="a">
  <div class="a st" style="left:467px">Plain Text</div><div class="a tri" style="left:538px;top:8px"></div>
  <div class="a st" style="left:565px">Tab Width: 8</div><div class="a tri" style="left:654px;top:8px"></div>
  <div class="a st" style="left:718px;letter-spacing:-.3px">Ln 26, Col 1</div><div class="a tri" style="left:831px;top:8px"></div>
  <div class="a st" style="left:870px">INS</div>
 </div>
</div>
</body></html>
